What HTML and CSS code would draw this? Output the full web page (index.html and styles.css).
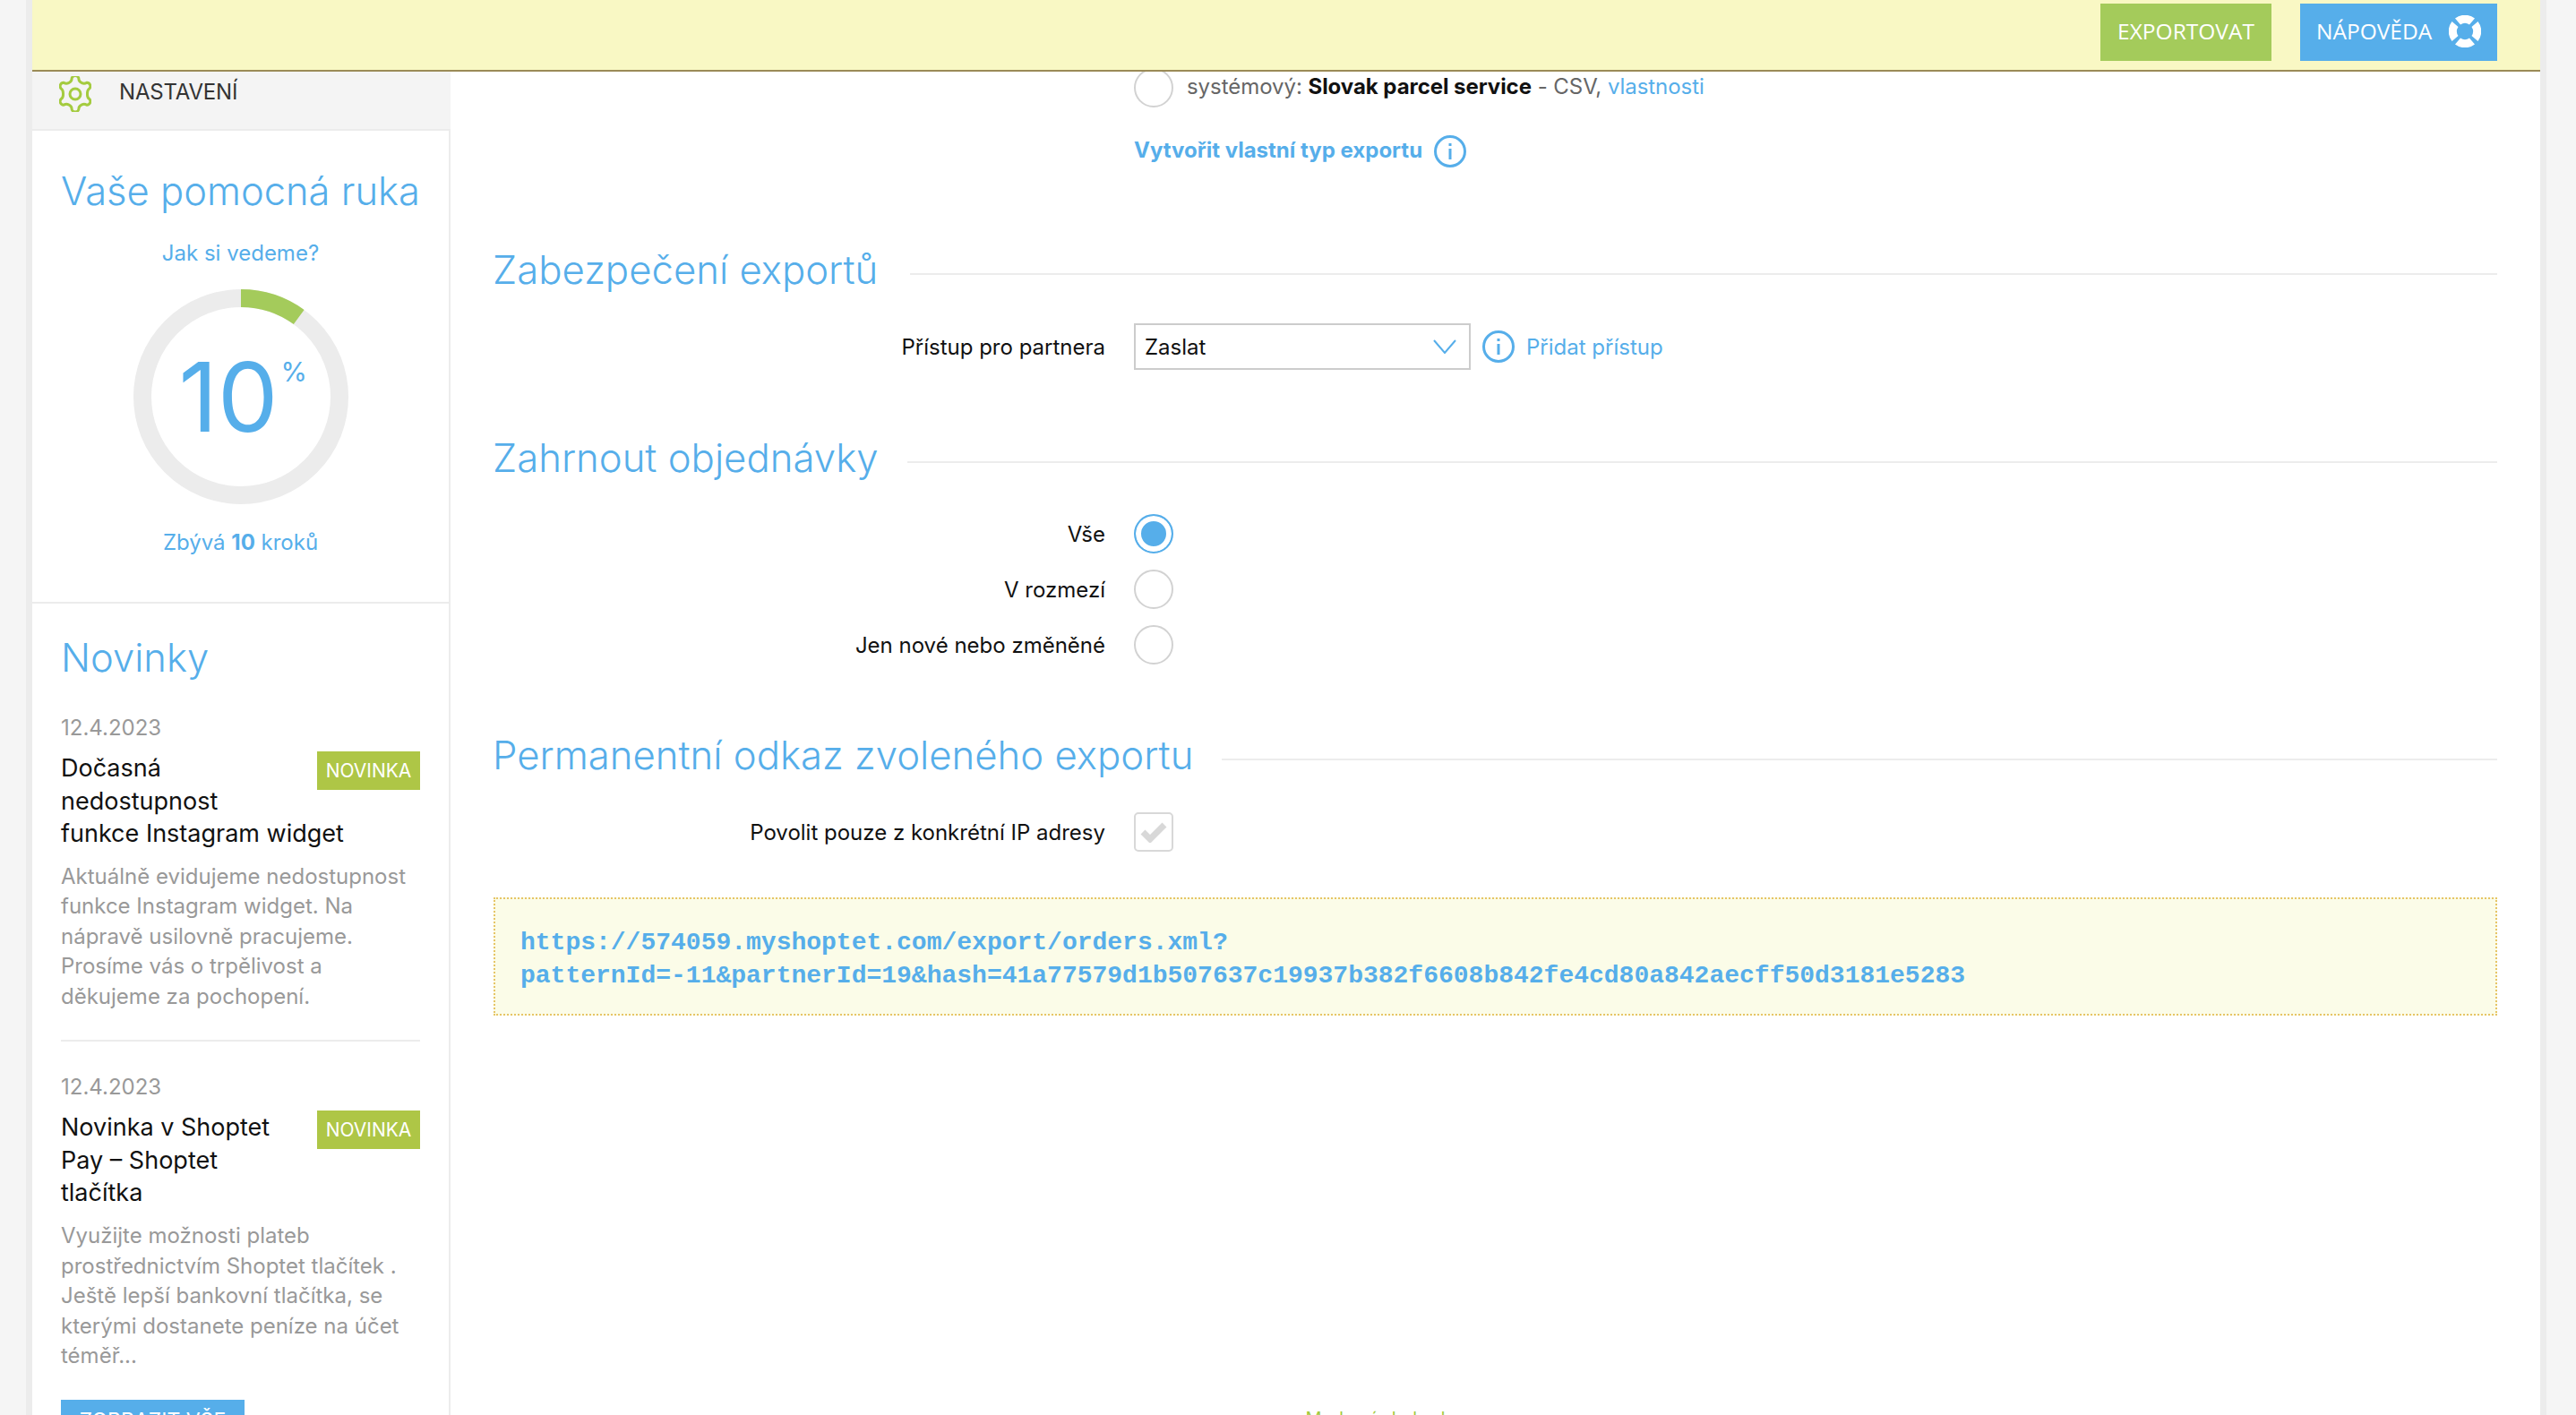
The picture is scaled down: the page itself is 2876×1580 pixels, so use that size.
FILE: index.html
```html
<!DOCTYPE html>
<html lang="cs">
<head>
<meta charset="utf-8">
<title>Export objednávek</title>
<link rel="stylesheet" href="styles.css">
</head>
<body>
<div class="shell">
  <header class="topbar">
    <a class="btn btn-green">EXPORTOVAT</a>
    <a class="btn btn-blue">NÁPOVĚDA
      <svg class="buoy" width="36" height="36" viewBox="0 0 36 36"><path fill="#fff" d="M7 3.500a18 18 0 0 1 22 0L23 10.500a9 9 0 0 0-10 0ZM32.500 7a18 18 0 0 1 0 22L25.500 23a9 9 0 0 0 0-10ZM29 32.500a18 18 0 0 1-22 0l6-7a9 9 0 0 0 10 0ZM3.500 29a18 18 0 0 1 0-22L10.500 13a9 9 0 0 0 0 10Z"/></svg>
    </a>
  </header>
  <div class="columns">
    <aside class="sidebar">
      <div class="navitem">
        <svg width="36" height="40" viewBox="0 0 36 40" fill="none" stroke="#a4cb3f" stroke-width="3"><path d="M14 3.500a4 4 0 0 1 8 0c0 2.500 1.500 3 3.500 4.200 2 1 3.500.8 5.500-.5a4 4 0 0 1 3 6.500c-2 1.300-2.500 2.800-2.500 5.300v2c0 2.500.5 3.500 2.500 4.800a4 4 0 0 1-3 6.500c-2-1.300-3.500-1.500-5.500-.5-2 1.200-3.500 1.700-3.500 4.200a4 4 0 0 1-8 0c0-2.500-1.500-3-3.500-4.200-2-1-3.500-.8-5.500.5a4 4 0 0 1-3-6.500c2-1.300 2.500-2.300 2.500-4.800v-2c0-2.500-.5-4-2.500-5.300a4 4 0 0 1 3-6.500c2 1.300 3.500 1.500 5.500.5 2-1.200 3.500-1.700 3.500-4.200Z"/><circle cx="18" cy="20" r="6"/></svg>
        <span>NASTAVENÍ</span>
      </div>
      <div class="cards">
        <section class="card card-help">
          <h2 class="card-title">Vaše pomocná ruka</h2>
          <a class="help-link">Jak si vedeme?</a>
          <div class="ring">
            <svg width="240" height="240" viewBox="0 0 240 240" fill="none" stroke-width="20"><circle cx="120" cy="120" r="110" stroke="#ececec"/><path d="M120 10A110 110 0 0 1 184.700 31" stroke="#a4cb5b"/></svg>
            <div class="ring-value">10<sup class="ring-pct">%</sup></div>
          </div>
          <p class="help-left">Zbývá <b>10</b> kroků</p>
        </section>
        <section class="card card-news">
          <h2 class="card-title">Novinky</h2>
          <article class="news">
            <div class="news-date">12.4.2023</div>
            <div class="news-head">
              <span class="badge">NOVINKA</span>
              <h3>Dočasná nedostupnost funkce Instagram widget</h3>
            </div>
            <p>Aktuálně evidujeme nedostupnost funkce Instagram widget. Na nápravě usilovně pracujeme. Prosíme vás o trpělivost a děkujeme za pochopení.</p>
          </article>
          <article class="news news-last">
            <div class="news-date">12.4.2023</div>
            <div class="news-head">
              <span class="badge">NOVINKA</span>
              <h3>Novinka v Shoptet Pay – Shoptet tlačítka</h3>
            </div>
            <p>Využijte možnosti plateb prostřednictvím Shoptet tlačítek . Ještě lepší bankovní tlačítka, se kterými dostanete peníze na účet téměř...</p>
          </article>
          <a class="more">ZOBRAZIT VŠE</a>
        </section>
      </div>
    </aside>
    <main class="main">
      <div class="row row-first">
        <span class="label"></span>
        <span class="radio"></span>
        <span class="sys">systémový: <b>Slovak parcel service</b> - CSV, <a>vlastnosti</a></span>
      </div>
      <div class="row row-link">
        <span class="label"></span>
        <a class="create">Vytvořit vlastní typ exportu</a>
        <svg class="info info-create" width="36" height="36" viewBox="0 0 36 36" fill="none" stroke="#56aeea" stroke-width="3"><circle cx="18" cy="18" r="16.500"/><path d="M18 15v12M18 9v3"/></svg>
      </div>

      <div class="section-head s-security"><h2>Zabezpečení exportů</h2><i></i></div>
      <div class="row">
        <span class="label">Přístup pro partnera</span>
        <div class="select">Zaslat
          <svg width="26" height="16" viewBox="0 0 26 16" fill="none" stroke="#56aeea" stroke-width="2"><path d="M1 1l12 14L25 1"/></svg>
        </div>
        <svg class="info" width="36" height="36" viewBox="0 0 36 36" fill="none" stroke="#56aeea" stroke-width="3"><circle cx="18" cy="18" r="16.500"/><path d="M18 15v12M18 9v3"/></svg>
        <a class="add">Přidat přístup</a>
      </div>

      <div class="section-head s-orders"><h2>Zahrnout objednávky</h2><i></i></div>
      <div class="radios">
        <div class="row"><span class="label">Vše</span><span class="radio on"></span></div>
        <div class="row"><span class="label">V rozmezí</span><span class="radio"></span></div>
        <div class="row"><span class="label">Jen nové nebo změněné</span><span class="radio"></span></div>
      </div>

      <div class="section-head s-link"><h2>Permanentní odkaz zvoleného exportu</h2><i></i></div>
      <div class="row">
        <span class="label">Povolit pouze z konkrétní IP adresy</span>
        <span class="check"><svg width="30" height="24" viewBox="0 0 30 24" fill="none" stroke="#d8d8d8" stroke-width="7"><path d="M3 12l8 8L27 4"/></svg></span>
      </div>
      <div class="code">https://574059.myshoptet.com/export/orders.xml?<br>patternId=-11&amp;partnerId=19&amp;hash=41a77579d1b507637c19937b382f6608b842fe4cd80a842aecff50d3181e5283</div>
      <div class="foot">Moderní obchod</div>
    </main>
  </div>
</div>
</body>
</html>
```
FILE: styles.css
```css
* { box-sizing: border-box; }
html, body { margin: 0; height: 1580px; overflow: hidden; }
body { background: #f5f5f5; font-family: Inter, "Liberation Sans", sans-serif; font-size: 24px; color: #111; }
a { color: #56aeea; text-decoration: none; }
.shell { width: 2814px; height: 1580px; margin-left: 29px; border-left: 7px solid #ececec; border-right: 7px solid #ececec; background: #fff; display: flex; flex-direction: column; overflow: hidden; }
.topbar { flex: none; height: 80px; background: #f9f8c4; border-bottom: 2px solid #9b8b57; display: flex; justify-content: flex-end; align-items: flex-start; gap: 32px; padding: 4px 48px 0 0; position: relative; z-index: 2; }
.btn { height: 64px; padding-bottom: 3px; display: flex; align-items: center; color: #fff; font-family: "Open Sans", sans-serif; font-size: 24.500px; }
.btn-green { width: 191px; justify-content: center; background: #a4cb5b; }
.btn-blue { width: 220px; background: #56aeea; padding-left: 18px; justify-content: space-between; padding-right: 18px; }
.columns { flex: 1; display: flex; min-height: 0; }
.sidebar { flex: none; width: 467px; display: flex; flex-direction: column; }
.navitem { flex: none; height: 66px; background: #f4f4f4; border-bottom: 2px solid #ececec; display: flex; align-items: flex-start; gap: 31px; padding: 5px 0 0 30px; color: #333; }
.navitem span { line-height: 36px; letter-spacing: -0.200px; }
.cards { flex: 1; border-right: 2px solid #ececec; min-height: 0; }
.card { padding: 0 32px; }
.card-help { height: 528px; border-bottom: 2px solid #ececec; text-align: center; padding-top: 37px; }
.card-title { margin: 0; font-size: 43.500px; line-height: 60px; font-weight: 300; color: #56aeea; white-space: nowrap; }
.help-link { display: block; margin-top: 23px; line-height: 34px; }
.ring { position: relative; width: 240px; height: 240px; margin: 23px auto 0; }
.ring-value { position: absolute; inset: 0; display: flex; justify-content: center; align-items: center; padding-right: 27px; font-size: 107px; font-weight: 400; color: #56aeea; }
.ring-pct { position: absolute; left: 165px; top: 72px; font-size: 30px; line-height: 40px; }
.help-left { margin: 26px 0 0; line-height: 34px; color: #56aeea; }
.card-news { padding-top: 30px; }
.news { padding-bottom: 32px; border-bottom: 2px solid #ececec; margin-top: 32px; }
.news-last { border-bottom: 0; margin-top: 34px; padding-bottom: 32px; }
.news-date { color: #999; line-height: 34px; }
.news-head { margin-top: 10px; }
.news h3 { margin: 0; font-size: 27px; line-height: 36.500px; font-weight: 400; color: #111; }
.badge { float: right; width: 115px; height: 43px; margin: -1px 0 0 40px; background: #aec646; color: #fff; font-size: 21px; display: flex; align-items: center; justify-content: center; }
.news p { margin: 12px 0 0; color: #999; line-height: 33.600px; }
.more { display: flex; width: 205px; height: 46px; background: #56aeea; color: #fff; align-items: center; justify-content: center; font-size: 23px; }
.main { flex: 1; min-width: 0; padding: 0 48px; }
.row { display: flex; align-items: center; min-height: 44px; }
.label { flex: none; width: 683px; margin-right: 32px; text-align: right; }
.row-first { margin-top: -4px; color: #666; }
.sys { padding-bottom: 3px; letter-spacing: -0.050px; }
.sys b { color: #111; }
.row-first .radio { margin-right: 15px; }
.radio { flex: none; width: 44px; height: 44px; border: 2px solid #d2d2d2; border-radius: 50%; background: #fff; }
.radio.on { border-color: #56aeea; background: #56aeea; box-shadow: inset 0 0 0 6px #fff; }
.row-link { margin-top: 25px; }
.create { font-weight: 700; }
.info { flex: none; margin-left: 13px; }
.info-create { margin-top: 3px; }
.section-head { display: flex; align-items: center; gap: 32px; }
.section-head h2 { margin: 0 0 0 -1px; font-size: 43.700px; line-height: 60px; font-weight: 300; color: #56aeea; white-space: nowrap; }
.section-head i { flex: 1; height: 2px; margin-top: 7px; background: #ececec; }
.s-security { gap: 36px; margin-top: 83px; margin-bottom: 29px; }
.s-orders { margin-top: 69px; margin-bottom: 32px; }
.s-link { margin-top: 72px; margin-bottom: 33px; }
.select { flex: none; width: 376px; height: 52px; border: 2px solid #ccc; padding: 0 14px 0 10px; display: flex; align-items: center; justify-content: space-between; background: #fff; }
.add { margin-left: 13px; }
.radios { display: flex; flex-direction: column; gap: 18px; }
.check { flex: none; width: 44px; height: 44px; border: 2px solid #d8d8d8; border-radius: 5px; display: flex; align-items: center; justify-content: center; }
.code { margin-top: 51px; height: 132px; border: 2px dotted #e6c566; background: #fbfce8; padding: 30px 28px 0; font-family: "Liberation Mono", monospace; font-weight: 700; font-size: 28px; line-height: 37px; color: #56aeea; white-space: nowrap; }
.foot { margin-top: 438px; padding-right: 268px; text-align: center; color: #a4cb3f; font-size: 20px; }
```
